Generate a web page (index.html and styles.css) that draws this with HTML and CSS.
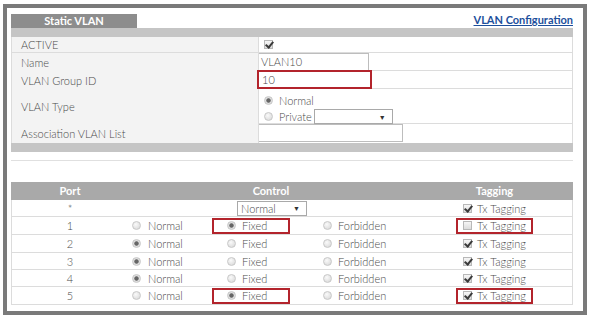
FILE: index.html
```html
<!DOCTYPE html>
<html lang="en">
  <head>
    <meta charset="UTF-8" />
    <title>Static VLAN</title>
    <link rel="stylesheet" href="styles.css">
  </head>
  <body>
    <div class="frame">
      <div class="panel">
        <div class="top">
          <div class="tab">Static VLAN</div>
          <a class="link" href="#">VLAN Configuration</a>
        </div>
        <div class="bar"></div>

        <div class="form">
          <div class="row h16">
            <div class="label">ACTIVE</div>
            <div class="value pad"><span class="check on"></span></div>
          </div>
          <div class="row h18">
            <div class="label">Name</div>
            <div class="value"><div class="input w110">VLAN10</div></div>
          </div>
          <div class="row h18">
            <div class="label">VLAN Group ID</div>
            <div class="value"><div class="input w113 mark">10</div></div>
          </div>
          <div class="row h35">
            <div class="label">VLAN Type</div>
            <div class="value types">
              <div class="opt-line"><span class="radio on"></span><span>Normal</span></div>
              <div class="opt-line">
                <span class="radio"></span><span>Private</span>
                <div class="select w79"><span></span><span class="arrow">▼</span></div>
              </div>
            </div>
          </div>
          <div class="row h19">
            <div class="label">Association VLAN List</div>
            <div class="value"><div class="input w144"></div></div>
          </div>
        </div>
        <div class="bar"></div>
        <div class="sep"></div>

        <div class="ports">
          <div class="head">
            <div class="c-port">Port</div>
            <div class="c-ctrl">Control</div>
            <div class="c-tag">Tagging</div>
          </div>

          <div class="prow h17">
            <div class="c-port">*</div>
            <div class="c-ctrl center">
              <div class="select w70">Normal<span class="arrow">▼</span></div>
            </div>
            <div class="c-tag"><label class="tx"><span class="check on"></span>Tx Tagging</label></div>
          </div>

          <div class="prow h18">
            <div class="c-port">1</div>
            <div class="c-ctrl">
              <label class="opt first"><span class="radio"></span>Normal</label>
              <label class="opt mark"><span class="radio on"></span>Fixed</label>
              <label class="opt"><span class="radio"></span>Forbidden</label>
            </div>
            <div class="c-tag"><label class="tx mark"><span class="check"></span>Tx Tagging</label></div>
          </div>

          <div class="prow h18">
            <div class="c-port">2</div>
            <div class="c-ctrl">
              <label class="opt first"><span class="radio on"></span>Normal</label>
              <label class="opt"><span class="radio"></span>Fixed</label>
              <label class="opt"><span class="radio"></span>Forbidden</label>
            </div>
            <div class="c-tag"><label class="tx"><span class="check on"></span>Tx Tagging</label></div>
          </div>

          <div class="prow h17">
            <div class="c-port">3</div>
            <div class="c-ctrl">
              <label class="opt first"><span class="radio on"></span>Normal</label>
              <label class="opt"><span class="radio"></span>Fixed</label>
              <label class="opt"><span class="radio"></span>Forbidden</label>
            </div>
            <div class="c-tag"><label class="tx"><span class="check on"></span>Tx Tagging</label></div>
          </div>

          <div class="prow h17">
            <div class="c-port">4</div>
            <div class="c-ctrl">
              <label class="opt first"><span class="radio on"></span>Normal</label>
              <label class="opt"><span class="radio"></span>Fixed</label>
              <label class="opt"><span class="radio"></span>Forbidden</label>
            </div>
            <div class="c-tag"><label class="tx"><span class="check on"></span>Tx Tagging</label></div>
          </div>

          <div class="prow h18">
            <div class="c-port">5</div>
            <div class="c-ctrl">
              <label class="opt first"><span class="radio"></span>Normal</label>
              <label class="opt mark"><span class="radio on"></span>Fixed</label>
              <label class="opt"><span class="radio"></span>Forbidden</label>
            </div>
            <div class="c-tag"><label class="tx mark"><span class="check on"></span>Tx Tagging</label></div>
          </div>
        </div>
      </div>
    </div>
  </body>
</html>
```

FILE: styles.css
```css
* {
  margin: 0;
  padding: 0;
  box-sizing: border-box;
}

body {
  width: 590px;
  height: 322px;
  background-color: #fff;
  font-family: "Lato", "Liberation Sans", sans-serif;
  font-size: 11px;
  font-weight: 300;
  color: #4a4a4a;
  overflow: hidden;
}

.frame {
  margin: 4px 0 0 3px;
  width: 584px;
  height: 311px;
  border: 4px solid #7a7a7a;
  padding: 6px 10px 0 4px;
}

/* title line */
.top {
  display: flex;
  justify-content: space-between;
  align-items: flex-start;
  height: 14px;
}

.tab {
  width: 126px;
  height: 14px;
  background-color: #8d8d8d;
  color: #fff;
  font-weight: bold;
  text-align: center;
  line-height: 14px;
}

.link {
  color: #1d4f9c;
  font-weight: bold;
  line-height: 12px;
  text-decoration: underline;
}

.bar {
  height: 9px;
  background-color: #c5c5c5;
}

/* upper form */
.form {
  border-left: 1px solid #dcdcdc;
  border-right: 1px solid #dcdcdc;
}

.row {
  display: grid;
  grid-template-columns: 247px 1fr;
  border-bottom: 1px solid #dcdcdc;
}

.row:last-child {
  border-bottom: none;
}

.h16 { height: 16px; }
.h17 { height: 17px; }
.h18 { height: 18px; }
.h19 { height: 19px; }
.h35 { height: 35px; }

.label {
  background-color: #f3f3f3;
  border-right: 1px solid #dcdcdc;
  padding-left: 9px;
  display: flex;
  align-items: center;
}

.value {
  display: flex;
  align-items: stretch;
}

.value.pad {
  align-items: center;
  padding-left: 5px;
}

.input {
  height: 18px;
  border: 1px solid #bdbdbd;
  border-left: none;
  padding-left: 2px;
  line-height: 16px;
  background-color: #fff;
}

.input.mark {
  margin-top: -1px;
  height: 19px;
  border: 2px solid #b3242c;
  margin-left: -2px;
  padding-left: 3px;
  line-height: 15px;
}

.w110 { width: 110px; }
.w113 { width: 115px; }
.w144 { width: 144px; }
.w70 { width: 70px; }
.w79 { width: 79px; }

.types {
  flex-direction: column;
  padding: 4px 0 0 5px;
  gap: 1px;
}

.opt-line {
  display: flex;
  align-items: center;
  gap: 6px;
  height: 15px;
}

.opt-line .select {
  margin-left: -4px;
}

.select {
  height: 15px;
  border: 1px solid #a9a9a9;
  background-color: #fff;
  display: flex;
  justify-content: space-between;
  align-items: center;
  padding: 0 6px 0 3px;
}

.arrow {
  font-size: 7px;
  color: #333;
}

/* radio and check boxes */
.radio {
  display: inline-block;
  flex: none;
  width: 9px;
  height: 9px;
  border-radius: 50%;
  border: 1px solid #c8c8c8;
  background: radial-gradient(circle at 40% 35%, #fafafa 0%, #d8d8d8 90%);
}

.radio.on {
  background: radial-gradient(circle, #666 0, #666 1.8px, #e2e2e2 2.6px, #d0d0d0 100%);
}

.check {
  display: inline-block;
  flex: none;
  width: 9px;
  height: 9px;
  border: 1px solid #b8b8b8;
  background: linear-gradient(#f6f6f6, #dcdcdc);
  position: relative;
}

.check.on::after {
  content: "";
  position: absolute;
  left: 2px;
  top: -1px;
  width: 3px;
  height: 6px;
  border-right: 2px solid #3a3a3a;
  border-bottom: 2px solid #3a3a3a;
  transform: rotate(40deg);
}

.sep {
  margin-top: 8px;
  height: 1px;
  background-color: #e0e0e0;
}

/* ports table */
.ports {
  margin-top: 21px;
}

.head {
  display: grid;
  grid-template-columns: 118px 284px 1fr;
  height: 18px;
  background-color: #a9a9a9;
  color: #fff;
  font-weight: bold;
  line-height: 18px;
}

.head div {
  text-align: center;
}

.head .c-ctrl {
  justify-content: center;
}

.prow {
  display: grid;
  grid-template-columns: 118px 284px 1fr;
  border-bottom: 1px solid #dcdcdc;
  border-left: 1px solid #dcdcdc;
  border-right: 1px solid #dcdcdc;
  align-items: center;
}

.prow .c-port {
  text-align: center;
  padding-right: 2px;
}

.c-ctrl {
  display: flex;
  align-items: center;
  height: 100%;
}

.c-ctrl.center {
  justify-content: center;
}

.opt {
  display: flex;
  align-items: center;
  gap: 6px;
  width: 96px;
  height: 16px;
  padding-left: 15px;
}

.opt.first {
  width: 82px;
  padding-left: 2px;
  gap: 7px;
}

.opt.mark {
  width: 78px;
  margin-right: 18px;
  padding-left: 13px;
  border: 2px solid #b3242c;
}

.c-tag {
  display: flex;
  justify-content: center;
  height: 100%;
  align-items: center;
  padding-left: 3px;
}

.tx {
  display: flex;
  align-items: center;
  gap: 5px;
  width: 77px;
  height: 16px;
  padding-left: 7px;
}

.tx.mark {
  border: 2px solid #b3242c;
  padding-left: 5px;
}
```
